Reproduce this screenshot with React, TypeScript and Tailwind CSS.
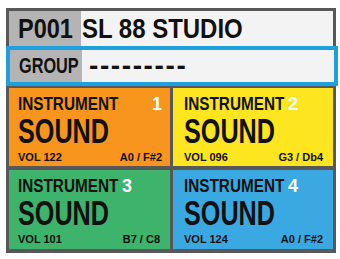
export default function App() {
  const cards = [
    { n: '1', bg: 'bg-[#f7951d]', pad: 'pl-[9px] pr-[8px]', vol: '122', range: 'A0 / F#2', numRight: true },
    { n: '2', bg: 'bg-[#fde51f]', pad: 'pl-[11px] pr-[10px]', vol: '096', range: 'G3 / Db4', numRight: false },
    { n: '3', bg: 'bg-[#3db36c]', pad: 'pl-[9px] pr-[10px]', vol: '101', range: 'B7 / C8', numRight: false },
    { n: '4', bg: 'bg-[#3ba9e1]', pad: 'pl-[11px] pr-[10px]', vol: '124', range: 'A0 / F#2', numRight: false },
  ]

  return (
    <div className="w-[340px] h-[259px] bg-white pt-[8px] pl-[6px] font-['Liberation_Sans',Arial,sans-serif] font-bold text-[#111]">
      <div className="w-[330px] h-[245px] border-[3px] border-[#585858] bg-[#585858] flex flex-col">
        {/* Patch name */}
        <div className="h-[35px] flex items-stretch bg-[#f3f3f3]">
          <div className="bg-[#b4b4b4] w-[72px] pl-[9px] flex items-center text-[28px] leading-none">
            <span className="inline-block origin-left scale-x-[0.84]">P001</span>
          </div>
          <div className="pl-[1px] flex items-center text-[28px] leading-none">
            <span className="inline-block origin-left scale-x-[0.856] whitespace-nowrap">SL 88 STUDIO</span>
          </div>
        </div>

        {/* Group */}
        <div className="h-[40px] -ml-[3px] -mr-[5px] border-[4px] border-[#1ea0dc] flex items-stretch bg-[#f3f3f3]">
          <div className="bg-[#b4b4b4] w-[72px] pl-[9px] flex items-center text-[22px] leading-none">
            <span className="inline-block origin-left scale-x-[0.74]">GROUP</span>
          </div>
          <div className="pl-[7px] flex items-center text-[28px] leading-none tracking-[1.6px]">---------</div>
        </div>

        {/* Instruments */}
        <div className="mt-[2px] flex-1 grid grid-cols-[161px_160px] grid-rows-[78px_79px] gap-x-[3px] gap-y-[4px]">
          {cards.map((c) => (
            <div key={c.n} className={`${c.bg} ${c.pad} flex flex-col pt-[7px]`}>
              <div className="flex text-[18px] leading-none">
                <span className="inline-block origin-left scale-x-[0.85] -mr-[18px]">INSTRUMENT</span>
                {c.numRight ? (
                  <span className="ml-auto text-white">{c.n}</span>
                ) : (
                  <span className="ml-[4px] text-white">{c.n}</span>
                )}
              </div>
              <div className="text-[35px] leading-none">
                <span className="inline-block origin-left scale-x-[0.72]">SOUND</span>
              </div>
              <div className="mt-[4px] flex justify-between text-[11px] leading-none">
                <span>VOL {c.vol}</span>
                <span>{c.range}</span>
              </div>
            </div>
          ))}
        </div>
      </div>
    </div>
  )
}
